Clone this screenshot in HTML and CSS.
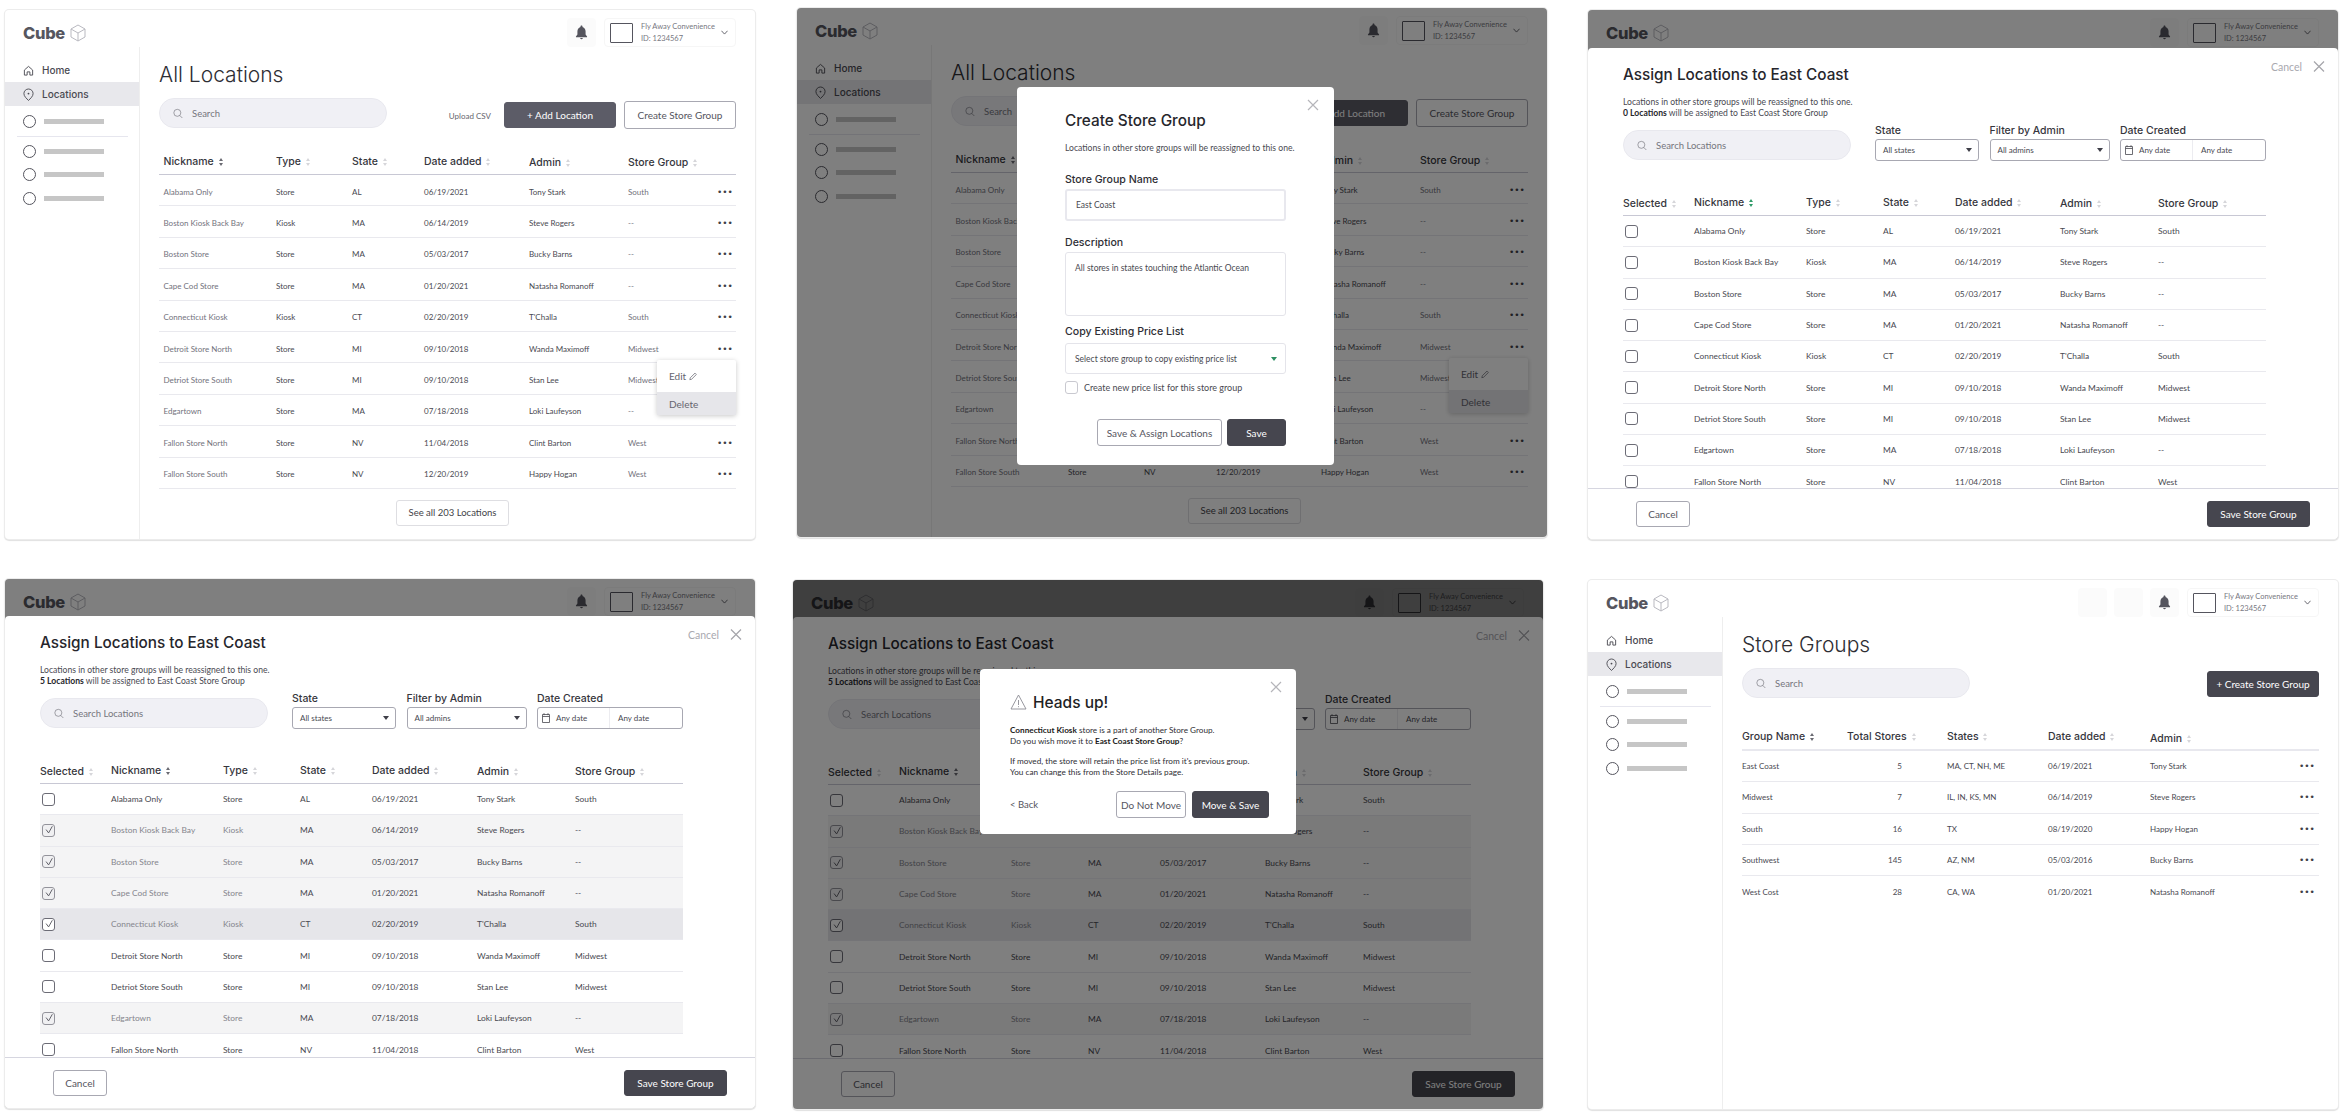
FILE: index.html
```html
<!DOCTYPE html>
<html>
<head>
  <meta charset="utf-8">
  <title>Cube store groups flow</title>
  <link rel="stylesheet" href="styles.css">
</head>
<body>
  <svg class="icon-defs" aria-hidden="true">
    <symbol id="i-cube" viewBox="0 0 16 18"><path d="M8 1l7 4v8l-7 4-7-4V5zM1 5l7 4 7-4M8 9v8" fill="none" stroke="currentColor"/></symbol>
    <symbol id="i-bell" viewBox="0 0 14 16"><path d="M7 .5c-.7 0-1.1.5-1.1 1.1v.5C3.7 2.7 2.6 4.6 2.6 7v3.2L1 12.2v.8h12v-.8l-1.6-2V7c0-2.4-1.1-4.3-3.3-4.9v-.5C8.100 1 7.700.5 7 .5zM5.600 13.800a1.400 1.400 0 0 0 2.800 0z" fill="currentColor"/></symbol>
    <symbol id="i-home" viewBox="0 0 12 12"><path d="M1.500 5.500L6 1.500l4.500 4V11H7.500V7.500h-3V11h-3z" fill="none" stroke="currentColor"/></symbol>
    <symbol id="i-pin" viewBox="0 0 12 14"><path d="M6 1a5 5 0 0 1 5 5c0 3-3 5.500-5 7.500C4 11.500 1 9 1 6a5 5 0 0 1 5-5z" fill="none" stroke="currentColor"/><circle cx="6" cy="6" r="1" fill="currentColor"/></symbol>
    <symbol id="i-search" viewBox="0 0 12 12"><circle cx="5.200" cy="5.200" r="4.200" fill="none" stroke="currentColor" stroke-width=".8"/><path d="M8.200 8.400l3 3" stroke="currentColor" stroke-width=".8"/></symbol>
    <symbol id="i-chev" viewBox="0 0 8 5"><path d="M.5.500L4 4.300 7.500.5" fill="none" stroke="currentColor"/></symbol>
    <symbol id="i-x" viewBox="0 0 12 12"><path d="M1 1l10 10M11 1L1 11" fill="none" stroke="currentColor" stroke-width="1.200"/></symbol>
    <symbol id="i-pencil" viewBox="0 0 10 10"><path d="M1 9l.6-2.400L7.500.8l1.700 1.700-5.900 5.900z" fill="none" stroke="currentColor" stroke-width=".9"/></symbol>
    <symbol id="i-cal" viewBox="0 0 8 10"><path d="M.5 1.500h7v8h-7zM.5 3.500h7M2 .2v2M6 .2v2" fill="none" stroke="currentColor" stroke-width=".8"/></symbol>
    <symbol id="i-check" viewBox="0 0 12 12"><path d="M2.500 5.500L5.500 9.500 10 1.500" fill="none" stroke="currentColor" stroke-width="1.100"/></symbol>
    <symbol id="i-warn" viewBox="0 0 17 16"><path d="M8.500 1L16 15H1zM8.500 6v5M8.500 12.200v1" fill="none" stroke="currentColor" stroke-width=".9"/></symbol>
  </svg>

  <div class="board">

    <!-- 1: all locations -->
    <section class="panel p1">
      <header class="topbar">
        <div class="logo">Cube<svg class="logo-cube"><use href="#i-cube"/></svg></div>
        <div class="tool-box"><svg class="bell"><use href="#i-bell"/></svg></div>
        <div class="account">
          <span class="account-img"></span>
          <span class="account-text"><b>Fly Away Convenience</b><b>ID: 1234567</b></span>
          <svg class="chev"><use href="#i-chev"/></svg>
        </div>
      </header>
      <div class="shell">
        <nav class="sidebar">
          <a class="nav-item"><svg class="nav-icon"><use href="#i-home"/></svg>Home</a>
          <a class="nav-item active"><svg class="nav-icon"><use href="#i-pin"/></svg>Locations</a>
          <div class="ph first"><i></i><u></u></div>
          <hr class="nav-line">
          <div class="ph"><i></i><u></u></div>
          <div class="ph"><i></i><u></u></div>
          <div class="ph"><i></i><u></u></div>
        </nav>
        <main class="main">
          <h1 class="page-title">All Locations</h1>
          <div class="actions">
            <div class="search"><svg><use href="#i-search"/></svg>Search</div>
            <a class="upload">Upload CSV</a>
            <button class="btn dark soft add">+ Add Location</button>
            <button class="btn line create">Create Store Group</button>
          </div>
          <div class="table locs">
            <div class="row head"><span>Nickname <i class="sort on"></i></span><span>Type <i class="sort"></i></span><span>State <i class="sort"></i></span><span>Date added <i class="sort"></i></span><span class="low">Admin <i class="sort"></i></span><span class="low">Store Group <i class="sort"></i></span></div>
            <div class="row"><span>Alabama Only</span><span>Store</span><span>AL</span><span>06/19/2021</span><span>Tony Stark</span><span>South</span><b class="dots">•••</b></div>
            <div class="row"><span>Boston Kiosk Back Bay</span><span>Kiosk</span><span>MA</span><span>06/14/2019</span><span>Steve Rogers</span><span>--</span><b class="dots">•••</b></div>
            <div class="row"><span>Boston Store</span><span>Store</span><span>MA</span><span>05/03/2017</span><span>Bucky Barns</span><span>--</span><b class="dots">•••</b></div>
            <div class="row"><span>Cape Cod Store</span><span>Store</span><span>MA</span><span>01/20/2021</span><span>Natasha Romanoff</span><span>--</span><b class="dots">•••</b></div>
            <div class="row"><span>Connecticut Kiosk</span><span>Kiosk</span><span>CT</span><span>02/20/2019</span><span>T'Challa</span><span>South</span><b class="dots">•••</b></div>
            <div class="row"><span>Detroit Store North</span><span>Store</span><span>MI</span><span>09/10/2018</span><span>Wanda Maximoff</span><span>Midwest</span><b class="dots">•••</b></div>
            <div class="row"><span>Detriot Store South</span><span>Store</span><span>MI</span><span>09/10/2018</span><span>Stan Lee</span><span>Midwest</span><b class="dots">•••</b></div>
            <div class="row"><span>Edgartown</span><span>Store</span><span>MA</span><span>07/18/2018</span><span>Loki Laufeyson</span><span>--</span><b class="dots">•••</b></div>
            <div class="row"><span>Fallon Store North</span><span>Store</span><span>NV</span><span>11/04/2018</span><span>Clint Barton</span><span>West</span><b class="dots">•••</b></div>
            <div class="row"><span>Fallon Store South</span><span>Store</span><span>NV</span><span>12/20/2019</span><span>Happy Hogan</span><span>West</span><b class="dots">•••</b></div>
          </div>
          <button class="btn line see-all">See all 203 Locations</button>
        </main>
      </div>
      <div class="row-menu">
        <div class="row-menu-item">Edit <svg><use href="#i-pencil"/></svg></div>
        <div class="row-menu-item del">Delete</div>
      </div>
    </section>

    <!-- 2: create store group modal -->
    <section class="panel p2">
      <header class="topbar">
        <div class="logo">Cube<svg class="logo-cube"><use href="#i-cube"/></svg></div>
        <div class="tool-box"><svg class="bell"><use href="#i-bell"/></svg></div>
        <div class="account">
          <span class="account-img"></span>
          <span class="account-text"><b>Fly Away Convenience</b><b>ID: 1234567</b></span>
          <svg class="chev"><use href="#i-chev"/></svg>
        </div>
      </header>
      <div class="shell">
        <nav class="sidebar">
          <a class="nav-item"><svg class="nav-icon"><use href="#i-home"/></svg>Home</a>
          <a class="nav-item active"><svg class="nav-icon"><use href="#i-pin"/></svg>Locations</a>
          <div class="ph first"><i></i><u></u></div>
          <hr class="nav-line">
          <div class="ph"><i></i><u></u></div>
          <div class="ph"><i></i><u></u></div>
          <div class="ph"><i></i><u></u></div>
        </nav>
        <main class="main">
          <h1 class="page-title">All Locations</h1>
          <div class="actions">
            <div class="search"><svg><use href="#i-search"/></svg>Search</div>
            <a class="upload">Upload CSV</a>
            <button class="btn dark soft add">+ Add Location</button>
            <button class="btn line create">Create Store Group</button>
          </div>
          <div class="table locs">
            <div class="row head"><span>Nickname <i class="sort on"></i></span><span>Type <i class="sort"></i></span><span>State <i class="sort"></i></span><span>Date added <i class="sort"></i></span><span class="low">Admin <i class="sort"></i></span><span class="low">Store Group <i class="sort"></i></span></div>
            <div class="row"><span>Alabama Only</span><span>Store</span><span>AL</span><span>06/19/2021</span><span>Tony Stark</span><span>South</span><b class="dots">•••</b></div>
            <div class="row"><span>Boston Kiosk Back Bay</span><span>Kiosk</span><span>MA</span><span>06/14/2019</span><span>Steve Rogers</span><span>--</span><b class="dots">•••</b></div>
            <div class="row"><span>Boston Store</span><span>Store</span><span>MA</span><span>05/03/2017</span><span>Bucky Barns</span><span>--</span><b class="dots">•••</b></div>
            <div class="row"><span>Cape Cod Store</span><span>Store</span><span>MA</span><span>01/20/2021</span><span>Natasha Romanoff</span><span>--</span><b class="dots">•••</b></div>
            <div class="row"><span>Connecticut Kiosk</span><span>Kiosk</span><span>CT</span><span>02/20/2019</span><span>T'Challa</span><span>South</span><b class="dots">•••</b></div>
            <div class="row"><span>Detroit Store North</span><span>Store</span><span>MI</span><span>09/10/2018</span><span>Wanda Maximoff</span><span>Midwest</span><b class="dots">•••</b></div>
            <div class="row"><span>Detriot Store South</span><span>Store</span><span>MI</span><span>09/10/2018</span><span>Stan Lee</span><span>Midwest</span><b class="dots">•••</b></div>
            <div class="row"><span>Edgartown</span><span>Store</span><span>MA</span><span>07/18/2018</span><span>Loki Laufeyson</span><span>--</span><b class="dots">•••</b></div>
            <div class="row"><span>Fallon Store North</span><span>Store</span><span>NV</span><span>11/04/2018</span><span>Clint Barton</span><span>West</span><b class="dots">•••</b></div>
            <div class="row"><span>Fallon Store South</span><span>Store</span><span>NV</span><span>12/20/2019</span><span>Happy Hogan</span><span>West</span><b class="dots">•••</b></div>
          </div>
          <button class="btn line see-all">See all 203 Locations</button>
        </main>
      </div>
      <div class="row-menu">
        <div class="row-menu-item">Edit <svg><use href="#i-pencil"/></svg></div>
        <div class="row-menu-item del">Delete</div>
      </div>
      <div class="scrim"></div>
      <div class="modal create-modal">
        <svg class="modal-close"><use href="#i-x"/></svg>
        <h2 class="modal-title">Create Store Group</h2>
        <p class="modal-sub">Locations in other store groups will be reassigned to this one.</p>
        <label class="field-label first">Store Group Name</label>
        <div class="input focus">East Coast</div>
        <label class="field-label">Description</label>
        <div class="input area">All stores in states touching the Atlantic Ocean</div>
        <label class="field-label tight">Copy Existing Price List</label>
        <div class="input pick">Select store group to copy existing price list<i class="caret green"></i></div>
        <div class="check-line"><i class="cb"></i>Create new price list for this store group</div>
        <div class="modal-btns">
          <button class="btn line assign">Save &amp; Assign Locations</button>
          <button class="btn dark save">Save</button>
        </div>
      </div>
    </section>

    <!-- 3: assign locations, nothing picked -->
    <section class="panel p3">
      <header class="topbar">
        <div class="logo">Cube<svg class="logo-cube"><use href="#i-cube"/></svg></div>
        <div class="tool-box"><svg class="bell"><use href="#i-bell"/></svg></div>
        <div class="account">
          <span class="account-img"></span>
          <span class="account-text"><b>Fly Away Convenience</b><b>ID: 1234567</b></span>
          <svg class="chev"><use href="#i-chev"/></svg>
        </div>
      </header>
      <div class="scrim"></div>
      <div class="sheet">
        <div class="sheet-close">Cancel<svg><use href="#i-x"/></svg></div>
        <h2 class="sheet-title">Assign Locations to East Coast</h2>
        <p class="sheet-sub">Locations in other store groups will be reassigned to this one.<br><b>0 Locations</b> will be assigned to East Coast Store Group</p>
        <div class="filters">
          <div class="search"><svg><use href="#i-search"/></svg>Search Locations</div>
          <div class="filter state"><label>State</label><div class="pick-sm">All states<i class="caret"></i></div></div>
          <div class="filter admin"><label>Filter by Admin</label><div class="pick-sm">All admins<i class="caret"></i></div></div>
          <div class="filter date"><label>Date Created</label><div class="pick-sm dates"><span><svg><use href="#i-cal"/></svg>Any date</span><span>Any date</span></div></div>
        </div>
        <div class="table assign-list">
          <div class="row head"><span class="low">Selected <i class="sort"></i></span><span>Nickname <i class="sort green"></i></span><span>Type <i class="sort"></i></span><span>State <i class="sort"></i></span><span>Date added <i class="sort"></i></span><span class="low">Admin <i class="sort"></i></span><span class="low">Store Group <i class="sort"></i></span></div>
          <div class="rows-clip">
            <div class="row"><span><i class="cb"></i></span><span>Alabama Only</span><span>Store</span><span>AL</span><span>06/19/2021</span><span>Tony Stark</span><span>South</span></div>
            <div class="row"><span><i class="cb"></i></span><span>Boston Kiosk Back Bay</span><span>Kiosk</span><span>MA</span><span>06/14/2019</span><span>Steve Rogers</span><span>--</span></div>
            <div class="row"><span><i class="cb"></i></span><span>Boston Store</span><span>Store</span><span>MA</span><span>05/03/2017</span><span>Bucky Barns</span><span>--</span></div>
            <div class="row"><span><i class="cb"></i></span><span>Cape Cod Store</span><span>Store</span><span>MA</span><span>01/20/2021</span><span>Natasha Romanoff</span><span>--</span></div>
            <div class="row"><span><i class="cb"></i></span><span>Connecticut Kiosk</span><span>Kiosk</span><span>CT</span><span>02/20/2019</span><span>T'Challa</span><span>South</span></div>
            <div class="row"><span><i class="cb"></i></span><span>Detroit Store North</span><span>Store</span><span>MI</span><span>09/10/2018</span><span>Wanda Maximoff</span><span>Midwest</span></div>
            <div class="row"><span><i class="cb"></i></span><span>Detriot Store South</span><span>Store</span><span>MI</span><span>09/10/2018</span><span>Stan Lee</span><span>Midwest</span></div>
            <div class="row"><span><i class="cb"></i></span><span>Edgartown</span><span>Store</span><span>MA</span><span>07/18/2018</span><span>Loki Laufeyson</span><span>--</span></div>
            <div class="row"><span><i class="cb"></i></span><span>Fallon Store North</span><span>Store</span><span>NV</span><span>11/04/2018</span><span>Clint Barton</span><span>West</span></div>
          </div>
        </div>
        <footer class="sheet-foot">
          <button class="btn line cancel">Cancel</button>
          <button class="btn dark save-group">Save Store Group</button>
        </footer>
      </div>
    </section>

    <!-- 4: assign locations, five picked -->
    <section class="panel p4">
      <header class="topbar">
        <div class="logo">Cube<svg class="logo-cube"><use href="#i-cube"/></svg></div>
        <div class="tool-box"><svg class="bell"><use href="#i-bell"/></svg></div>
        <div class="account">
          <span class="account-img"></span>
          <span class="account-text"><b>Fly Away Convenience</b><b>ID: 1234567</b></span>
          <svg class="chev"><use href="#i-chev"/></svg>
        </div>
      </header>
      <div class="scrim"></div>
      <div class="sheet">
        <div class="sheet-close">Cancel<svg><use href="#i-x"/></svg></div>
        <h2 class="sheet-title">Assign Locations to East Coast</h2>
        <p class="sheet-sub">Locations in other store groups will be reassigned to this one.<br><b>5 Locations</b> will be assigned to East Coast Store Group</p>
        <div class="filters">
          <div class="search"><svg><use href="#i-search"/></svg>Search Locations</div>
          <div class="filter state"><label>State</label><div class="pick-sm">All states<i class="caret"></i></div></div>
          <div class="filter admin"><label>Filter by Admin</label><div class="pick-sm">All admins<i class="caret"></i></div></div>
          <div class="filter date"><label>Date Created</label><div class="pick-sm dates"><span><svg><use href="#i-cal"/></svg>Any date</span><span>Any date</span></div></div>
        </div>
        <div class="table assign-list">
          <div class="row head"><span class="low">Selected <i class="sort"></i></span><span>Nickname <i class="sort on"></i></span><span>Type <i class="sort"></i></span><span>State <i class="sort"></i></span><span>Date added <i class="sort"></i></span><span class="low">Admin <i class="sort"></i></span><span class="low">Store Group <i class="sort"></i></span></div>
          <div class="rows-clip">
            <div class="row"><span><i class="cb"></i></span><span>Alabama Only</span><span>Store</span><span>AL</span><span>06/19/2021</span><span>Tony Stark</span><span>South</span></div>
            <div class="row sel"><span><i class="cb"><svg><use href="#i-check"/></svg></i></span><span>Boston Kiosk Back Bay</span><span>Kiosk</span><span>MA</span><span>06/14/2019</span><span>Steve Rogers</span><span>--</span></div>
            <div class="row sel"><span><i class="cb"><svg><use href="#i-check"/></svg></i></span><span>Boston Store</span><span>Store</span><span>MA</span><span>05/03/2017</span><span>Bucky Barns</span><span>--</span></div>
            <div class="row sel"><span><i class="cb"><svg><use href="#i-check"/></svg></i></span><span>Cape Cod Store</span><span>Store</span><span>MA</span><span>01/20/2021</span><span>Natasha Romanoff</span><span>--</span></div>
            <div class="row cur"><span><i class="cb"><svg><use href="#i-check"/></svg></i></span><span>Connecticut Kiosk</span><span>Kiosk</span><span>CT</span><span>02/20/2019</span><span>T'Challa</span><span>South</span></div>
            <div class="row"><span><i class="cb"></i></span><span>Detroit Store North</span><span>Store</span><span>MI</span><span>09/10/2018</span><span>Wanda Maximoff</span><span>Midwest</span></div>
            <div class="row"><span><i class="cb"></i></span><span>Detriot Store South</span><span>Store</span><span>MI</span><span>09/10/2018</span><span>Stan Lee</span><span>Midwest</span></div>
            <div class="row sel"><span><i class="cb"><svg><use href="#i-check"/></svg></i></span><span>Edgartown</span><span>Store</span><span>MA</span><span>07/18/2018</span><span>Loki Laufeyson</span><span>--</span></div>
            <div class="row"><span><i class="cb"></i></span><span>Fallon Store North</span><span>Store</span><span>NV</span><span>11/04/2018</span><span>Clint Barton</span><span>West</span></div>
          </div>
        </div>
        <footer class="sheet-foot">
          <button class="btn line cancel">Cancel</button>
          <button class="btn dark save-group">Save Store Group</button>
        </footer>
      </div>
    </section>

    <!-- 5: heads up dialog over the picked list -->
    <section class="panel p5">
      <header class="topbar">
        <div class="logo">Cube<svg class="logo-cube"><use href="#i-cube"/></svg></div>
        <div class="tool-box"><svg class="bell"><use href="#i-bell"/></svg></div>
        <div class="account">
          <span class="account-img"></span>
          <span class="account-text"><b>Fly Away Convenience</b><b>ID: 1234567</b></span>
          <svg class="chev"><use href="#i-chev"/></svg>
        </div>
      </header>
      <div class="scrim"></div>
      <div class="sheet">
        <div class="sheet-close">Cancel<svg><use href="#i-x"/></svg></div>
        <h2 class="sheet-title">Assign Locations to East Coast</h2>
        <p class="sheet-sub">Locations in other store groups will be reassigned to this one.<br><b>5 Locations</b> will be assigned to East Coast Store Group</p>
        <div class="filters">
          <div class="search"><svg><use href="#i-search"/></svg>Search Locations</div>
          <div class="filter state"><label>State</label><div class="pick-sm">All states<i class="caret"></i></div></div>
          <div class="filter admin"><label>Filter by Admin</label><div class="pick-sm">All admins<i class="caret"></i></div></div>
          <div class="filter date"><label>Date Created</label><div class="pick-sm dates"><span><svg><use href="#i-cal"/></svg>Any date</span><span>Any date</span></div></div>
        </div>
        <div class="table assign-list">
          <div class="row head"><span class="low">Selected <i class="sort"></i></span><span>Nickname <i class="sort on"></i></span><span>Type <i class="sort"></i></span><span>State <i class="sort"></i></span><span>Date added <i class="sort"></i></span><span class="low">Admin <i class="sort"></i></span><span class="low">Store Group <i class="sort"></i></span></div>
          <div class="rows-clip">
            <div class="row"><span><i class="cb"></i></span><span>Alabama Only</span><span>Store</span><span>AL</span><span>06/19/2021</span><span>Tony Stark</span><span>South</span></div>
            <div class="row sel"><span><i class="cb"><svg><use href="#i-check"/></svg></i></span><span>Boston Kiosk Back Bay</span><span>Kiosk</span><span>MA</span><span>06/14/2019</span><span>Steve Rogers</span><span>--</span></div>
            <div class="row sel"><span><i class="cb"><svg><use href="#i-check"/></svg></i></span><span>Boston Store</span><span>Store</span><span>MA</span><span>05/03/2017</span><span>Bucky Barns</span><span>--</span></div>
            <div class="row sel"><span><i class="cb"><svg><use href="#i-check"/></svg></i></span><span>Cape Cod Store</span><span>Store</span><span>MA</span><span>01/20/2021</span><span>Natasha Romanoff</span><span>--</span></div>
            <div class="row cur"><span><i class="cb"><svg><use href="#i-check"/></svg></i></span><span>Connecticut Kiosk</span><span>Kiosk</span><span>CT</span><span>02/20/2019</span><span>T'Challa</span><span>South</span></div>
            <div class="row"><span><i class="cb"></i></span><span>Detroit Store North</span><span>Store</span><span>MI</span><span>09/10/2018</span><span>Wanda Maximoff</span><span>Midwest</span></div>
            <div class="row"><span><i class="cb"></i></span><span>Detriot Store South</span><span>Store</span><span>MI</span><span>09/10/2018</span><span>Stan Lee</span><span>Midwest</span></div>
            <div class="row sel"><span><i class="cb"><svg><use href="#i-check"/></svg></i></span><span>Edgartown</span><span>Store</span><span>MA</span><span>07/18/2018</span><span>Loki Laufeyson</span><span>--</span></div>
            <div class="row"><span><i class="cb"></i></span><span>Fallon Store North</span><span>Store</span><span>NV</span><span>11/04/2018</span><span>Clint Barton</span><span>West</span></div>
          </div>
        </div>
        <footer class="sheet-foot">
          <button class="btn line cancel">Cancel</button>
          <button class="btn dark save-group">Save Store Group</button>
        </footer>
      </div>
      <div class="scrim"></div>
      <div class="modal heads-up">
        <svg class="modal-close"><use href="#i-x"/></svg>
        <h2 class="heads-title"><svg><use href="#i-warn"/></svg>Heads up!</h2>
        <p class="heads-text"><b>Connecticut Kiosk</b> store is a part of another Store Group.<br>Do you wish move it to <b>East Coast Store Group</b>?</p>
        <p class="heads-text">If moved, the store will retain the price list from it's previous group.<br>You can change this from the Store Details page.</p>
        <div class="heads-btns">
          <a class="back">&lt; Back</a>
          <button class="btn line no-move">Do Not Move</button>
          <button class="btn dark move">Move &amp; Save</button>
        </div>
      </div>
    </section>

    <!-- 6: store groups -->
    <section class="panel p6">
      <header class="topbar">
        <div class="logo">Cube<svg class="logo-cube"><use href="#i-cube"/></svg></div>
        <div class="tool-box spare"></div>
        <div class="tool-box spare"></div>
        <div class="tool-box"><svg class="bell"><use href="#i-bell"/></svg></div>
        <div class="account">
          <span class="account-img"></span>
          <span class="account-text"><b>Fly Away Convenience</b><b>ID: 1234567</b></span>
          <svg class="chev"><use href="#i-chev"/></svg>
        </div>
      </header>
      <div class="shell">
        <nav class="sidebar">
          <a class="nav-item"><svg class="nav-icon"><use href="#i-home"/></svg>Home</a>
          <a class="nav-item active"><svg class="nav-icon"><use href="#i-pin"/></svg>Locations</a>
          <div class="ph first"><i></i><u></u></div>
          <hr class="nav-line">
          <div class="ph"><i></i><u></u></div>
          <div class="ph"><i></i><u></u></div>
          <div class="ph"><i></i><u></u></div>
        </nav>
        <main class="main">
          <h1 class="page-title">Store Groups</h1>
          <div class="actions">
            <div class="search"><svg><use href="#i-search"/></svg>Search</div>
            <button class="btn dark new-group">+ Create Store Group</button>
          </div>
          <div class="table groups">
            <div class="row head"><span>Group Name <i class="sort on"></i></span><span>Total Stores <i class="sort"></i></span><span>States <i class="sort"></i></span><span>Date added <i class="sort"></i></span><span class="low">Admin <i class="sort"></i></span></div>
            <div class="row"><span>East Coast</span><span class="num">5</span><span>MA, CT, NH, ME</span><span>06/19/2021</span><span>Tony Stark</span><b class="dots">•••</b></div>
            <div class="row"><span>Midwest</span><span class="num">7</span><span>IL, IN, KS, MN</span><span>06/14/2019</span><span>Steve Rogers</span><b class="dots">•••</b></div>
            <div class="row"><span>South</span><span class="num">16</span><span>TX</span><span>08/19/2020</span><span>Happy Hogan</span><b class="dots">•••</b></div>
            <div class="row"><span>Southwest</span><span class="num">145</span><span>AZ, NM</span><span>05/03/2016</span><span>Bucky Barns</span><b class="dots">•••</b></div>
            <div class="row"><span>West Cost</span><span class="num">28</span><span>CA, WA</span><span>01/20/2021</span><span>Natasha Romanoff</span><b class="dots">•••</b></div>
          </div>
        </main>
      </div>
    </section>

  </div>
</body>
</html>
```

FILE: styles.css
```css
* {
  box-sizing: border-box;
}
body {
  margin: 0;
  background: #fff;
  font-family: "Lato", sans-serif;
  color: #3f3f48;
}
.icon-defs {
  display: none;
}
button {
  font: inherit;
  padding: 0;
  cursor: pointer;
}
h1, h2, p {
  margin: 0;
  font-weight: normal;
}

/* the six screens sit on a free board */
.board {
  position: relative;
  width: 2350px;
  height: 1120px;
  overflow: hidden;
}
.panel {
  position: absolute;
  width: 750px;
  height: 529px;
  background: #fff;
  border-radius: 4px;
  overflow: hidden;
  box-shadow: 0 0 0 1px #ececec, 0 1px 1px 1px #e0e0e0;
}
.p1 { left: 5px; top: 10px; }
.p2 { left: 797px; top: 8px; }
.p3 { left: 1588px; top: 10px; }
.p4 { left: 5px; top: 579px; }
.p5 { left: 793px; top: 580px; }
.p6 { left: 1588px; top: 580px; }

/* top bar */
.topbar {
  display: flex;
  height: 37px;
  padding: 8px 19px 0 18px;
  gap: 8px;
}
.logo {
  display: flex;
  align-items: center;
  margin-right: auto;
  font-family: "Inter", sans-serif;
  font-weight: 800;
  font-size: 16.500px;
  letter-spacing: -.3px;
  color: #56565f;
}
.logo-cube {
  width: 16px;
  height: 18px;
  margin-left: 5px;
  color: #b9b9c0;
}
.tool-box {
  display: flex;
  align-items: center;
  justify-content: center;
  width: 29px;
  background: #fbfbfb;
  border-radius: 4px;
}
.tool-box.spare {
  margin-right: -1px;
}
.bell {
  width: 13px;
  height: 15px;
  color: #55555e;
}
.account {
  display: flex;
  align-items: center;
  width: 132px;
  padding: 0 5px;
  border: 1px solid #f6f6f6;
  border-radius: 4px;
}
.account-img {
  width: 23px;
  height: 20px;
  border: 1px solid #55555e;
  border-radius: 1px;
}
.account-text {
  display: flex;
  flex-direction: column;
  gap: 4px;
  margin-left: 8px;
  font-size: 7.500px;
  line-height: 8px;
  color: #77777f;
}
.account-text b {
  font-weight: normal;
}
.chev {
  width: 7px;
  height: 5px;
  margin-left: auto;
  margin-right: 2px;
  color: #55555e;
}

/* sidebar */
.shell {
  display: flex;
  height: 492px;
}
.sidebar {
  flex: none;
  width: 135px;
  padding-top: 11px;
  border-right: 1px solid #eeeeee;
}
.nav-item {
  display: flex;
  align-items: center;
  height: 24px;
  padding-left: 18px;
  font-family: "Inter", sans-serif;
  font-size: 10px;
  font-weight: 500;
  color: #4a4a52;
}
.nav-item.active {
  background: #e8e8ec;
}
.nav-icon {
  width: 11px;
  height: 13px;
  margin-right: 8px;
  margin-left: 0;
}
.ph {
  display: flex;
  align-items: center;
  height: 23.500px;
  padding-left: 18px;
}
.ph.first {
  margin-top: 4px;
}
.ph i {
  width: 13px;
  height: 13px;
  border: 1px solid #55555e;
  border-radius: 50%;
}
.ph u {
  width: 60px;
  height: 5px;
  margin-left: 8px;
  background: #c6c6c6;
}
.nav-line {
  width: 111px;
  height: 1px;
  margin: 2px 0 3px 12px;
  border: 0;
  background: #e6e6ee;
}

/* main column */
.main {
  flex: 1;
  min-width: 0;
  padding: 13px 19px 0;
}
.page-title {
  height: 30px;
  font-family: "Inter", sans-serif;
  font-size: 21px;
  font-weight: 300;
  line-height: 30px;
  color: #2e2e34;
}
.actions {
  display: flex;
  align-items: flex-end;
  height: 30px;
  margin-top: 8px;
}
.search {
  display: flex;
  align-items: center;
  flex: none;
  align-self: flex-start;
  width: 228px;
  height: 30px;
  padding-left: 13px;
  background: #f0f0f5;
  border: 1px solid #e8e8ee;
  border-radius: 15px;
  font-size: 9.500px;
  color: #75757d;
}
.search svg {
  width: 10px;
  height: 11px;
  margin-right: 9px;
  color: #75757d;
}
.upload {
  margin-left: auto;
  margin-right: 13px;
  margin-bottom: 7px;
  font-size: 8px;
  color: #66666e;
}
.btn {
  display: inline-flex;
  align-items: center;
  justify-content: center;
  height: 27px;
  border-radius: 3px;
  font-size: 10px;
  white-space: nowrap;
}
.btn.dark {
  color: #fff;
  background: #46464f;
  border: 1px solid #46464f;
}
.btn.dark.soft {
  background: #5c5c67;
  border-color: #5c5c67;
}
.btn.line {
  color: #55555e;
  background: #fff;
  border: 1px solid #a8a8b2;
}
.add {
  width: 112px;
  height: 26px;
  margin-right: 8px;
}
.create {
  width: 112px;
  height: 28px;
  margin-bottom: -1px;
}
.btn.see-all {
  display: flex;
  width: 113px;
  height: 26px;
  margin: 11px 0 0 237px;
  border-color: #dedee2;
  color: #3f3f48;
  font-size: 9.500px;
}
.new-group {
  width: 112px;
  height: 26px;
  margin-left: auto;
  margin-bottom: 1px;
}

/* tables */
.table {
  margin-top: 20px;
}
.row {
  display: grid;
  align-items: center;
  height: 31.400px;
  border-bottom: 1px solid #e9e9ee;
  font-size: 8px;
  color: #494951;
  white-space: nowrap;
}
.row.head {
  height: 27px;
  border-bottom-color: #c8c8d4;
  font-family: "Inter", sans-serif;
  font-size: 10.500px;
  font-weight: 500;
  color: #36363d;
}
.row .low {
  padding-top: 3px;
}
.locs .row {
  grid-template-columns: 112.500px 76px 72px 105px 99px 89px 18px;
  padding-left: 4.500px;
}
.locs .row:not(.head) {
  padding-top: 3px;
}
.locs .row:not(.head) span:nth-child(1),
.locs .row:not(.head) span:nth-child(6) {
  color: #72727c;
}
.assign-list {
  margin-top: 28px;
}
.assign-list .row {
  grid-template-columns: 71px 112px 77px 72px 105px 98px 108px;
  height: 31.300px;
  font-size: 8.400px;
}
.assign-list .row.head {
  height: 27px;
  font-size: 10.500px;
}
.rows-clip {
  height: 272px;
  overflow: hidden;
}
.groups {
  margin-top: 26px;
}
.groups .row {
  grid-template-columns: 105px 100px 101px 102px 149px 20px;
  height: 31.300px;
}
.groups .row.head {
  height: 27px;
  border-bottom: 2px solid #e8e8ee;
}
.groups .row:last-child {
  border-bottom: 0;
}
.groups .num {
  width: 55px;
  text-align: right;
}
.dots {
  font-family: "DejaVu Sans", sans-serif;
  font-size: 9px;
  font-weight: normal;
  color: #3f3f48;
}
.row-menu {
  position: absolute;
  left: 652px;
  top: 350px;
  width: 79px;
  height: 55px;
  background: #fff;
  border-radius: 2px;
  box-shadow: 0 1px 5px rgba(0, 0, 0, .22);
  font-size: 10px;
  color: #65656e;
}
.row-menu-item {
  display: flex;
  align-items: center;
  height: 32px;
  padding-left: 12px;
}
.row-menu-item svg {
  width: 8px;
  height: 9px;
  margin-left: 3px;
}
.row-menu-item.del {
  height: 23px;
  background: #e6e6ea;
}
.sort {
  position: relative;
  display: inline-block;
  width: 5px;
  height: 8px;
  margin-left: 2px;
  vertical-align: -1px;
  color: #d6d6da;
}
.sort.on {
  color: #6a6a72;
}
.sort.green {
  color: #2e9a68;
}
.sort::before,
.sort::after {
  content: "";
  position: absolute;
  left: 0;
  border-left: 2.500px solid transparent;
  border-right: 2.500px solid transparent;
}
.sort::before {
  top: 0;
  border-bottom: 3.500px solid currentColor;
}
.sort::after {
  bottom: 0;
  border-top: 3.500px solid currentColor;
}

/* overlays */
.scrim {
  position: absolute;
  inset: 0;
  background: rgba(0, 0, 0, .5);
}
.modal {
  position: absolute;
  background: #fff;
  border-radius: 4px;
}
.modal-close {
  position: absolute;
  width: 12px;
  height: 12px;
  top: 12px;
  right: 15px;
  color: #b5b5ba;
}
.create-modal {
  left: 220px;
  top: 79px;
  width: 317px;
  height: 378px;
  padding: 25px 48px 0;
}
.modal-title {
  font-family: "Inter", sans-serif;
  font-size: 15.300px;
  font-weight: 500;
  line-height: 18px;
  color: #26262c;
}
.modal-sub {
  margin-top: 12px;
  font-size: 8.600px;
  line-height: 12px;
  white-space: nowrap;
  color: #494951;
}
.field-label {
  display: block;
  margin-top: 16px;
  font-family: "Inter", sans-serif;
  font-size: 10.600px;
  font-weight: 500;
  line-height: 12px;
  color: #2e2e34;
}
.field-label.first {
  margin-top: 20px;
}
.field-label.tight {
  margin-top: 10px;
}
.input {
  position: relative;
  display: flex;
  align-items: center;
  height: 32px;
  margin-top: 3px;
  padding-left: 9px;
  border: 1px solid #e4e4ea;
  border-radius: 3px;
  font-size: 8.500px;
  color: #494951;
}
.input.focus {
  border: 2px solid #e8e8ee;
}
.input.area {
  align-items: flex-start;
  height: 64px;
  padding-top: 10px;
}
.input.pick {
  height: 31px;
  margin-top: 5px;
}
.caret {
  position: absolute;
  right: 8px;
  top: 50%;
  margin-top: -2px;
  border-left: 3px solid transparent;
  border-right: 3px solid transparent;
  border-top: 4px solid #3f3f48;
}
.caret.green {
  border-top-color: #2e8f62;
}
.check-line {
  display: flex;
  align-items: center;
  height: 13px;
  margin-top: 7px;
  font-size: 9px;
  color: #494951;
}
.check-line .cb {
  margin-right: 6px;
  border-color: #c9c9d0;
}
.modal-btns {
  display: flex;
  justify-content: flex-end;
  gap: 5px;
  margin-top: 25px;
}
.assign {
  width: 125px;
}
.save {
  width: 59px;
}

/* assign sheet */
.sheet {
  position: absolute;
  left: 0;
  right: 0;
  top: 38px;
  bottom: 0;
  padding: 18px 72px 0 35px;
  background: #fff;
  border-radius: 4px 4px 0 0;
}
.p4 .sheet,
.p5 .sheet {
  top: 37px;
}
.sheet-close {
  position: absolute;
  top: 12px;
  right: 13px;
  display: flex;
  align-items: center;
  font-size: 10.500px;
  color: #a9a9af;
}
.sheet-close svg {
  width: 12px;
  height: 13px;
  margin-left: 11px;
  color: #a5a5aa;
}
.sheet-title {
  font-family: "Inter", sans-serif;
  font-size: 15.300px;
  font-weight: 500;
  line-height: 18px;
  color: #26262c;
}
.sheet-sub {
  margin-top: 12.500px;
  font-size: 8.600px;
  line-height: 11px;
  color: #494951;
}
.sheet-sub b {
  color: #26262c;
}
.filters {
  display: flex;
  height: 36px;
  margin-top: 6.500px;
}
.filters .search {
  margin-top: 5px;
}
.filter {
  margin-left: 10.500px;
}
.filter.state {
  margin-left: 24px;
  width: 104px;
}
.filter.admin {
  width: 120px;
}
.filter.date {
  width: 146px;
}
.filter label {
  display: block;
  font-family: "Inter", sans-serif;
  font-size: 10.500px;
  font-weight: 500;
  line-height: 12px;
  color: #36363d;
}
.pick-sm {
  position: relative;
  display: flex;
  align-items: center;
  height: 22px;
  margin-top: 2px;
  padding-left: 7px;
  background: #fff;
  border: 1px solid #a8a8b2;
  border-radius: 3px;
  font-size: 8px;
  color: #494951;
}
.pick-sm .caret {
  right: 6px;
}
.dates {
  padding-left: 0;
}
.dates span {
  display: flex;
  align-items: center;
  padding-left: 4px;
  width: 72px;
  height: 100%;
  border-right: 1px solid #ececf0;
}
.dates span:last-child {
  padding-left: 8px;
  border-right: 0;
}
.dates svg {
  width: 8px;
  height: 10px;
  margin-right: 6px;
}
.cb {
  display: flex;
  align-items: center;
  justify-content: center;
  width: 13px;
  height: 13px;
  margin-left: 2px;
  background: #fff;
  border: 1px solid #6c6c76;
  border-radius: 3px;
}
.check-line .cb {
  margin-left: 0;
}
.cb svg {
  width: 10px;
  height: 10px;
  color: #55555e;
}
.row.sel {
  background: #f4f4f5;
}
.row.cur {
  background: #e6e6ea;
}
.row.sel span:nth-child(2),
.row.sel span:nth-child(3),
.row.cur span:nth-child(2),
.row.cur span:nth-child(3) {
  color: #85858d;
}
.row.sel .cb {
  background: #f0f0f2;
  border-color: #93939b;
}
.sheet-foot {
  position: absolute;
  left: 0;
  right: 0;
  bottom: 0;
  display: flex;
  justify-content: space-between;
  align-items: flex-start;
  height: 51px;
  padding: 12px 28px 0 48px;
  background: #fff;
  border-top: 1px solid #d6d6e0;
}
.cancel {
  width: 54px;
  height: 26px;
}
.save-group {
  width: 103px;
  height: 26px;
}

/* heads up dialog */
.heads-up {
  left: 187px;
  top: 89px;
  width: 316px;
  height: 165px;
  padding: 22px 27px 0 30px;
}
.heads-up .modal-close {
  top: 12px;
  right: 14px;
}
.heads-title {
  display: flex;
  align-items: center;
  height: 22px;
  font-family: "Inter", sans-serif;
  font-size: 15.500px;
  font-weight: 500;
  color: #1f1f25;
}
.heads-title svg {
  width: 17px;
  height: 16px;
  margin-right: 6px;
  color: #8c8c94;
}
.heads-text {
  margin-top: 9px;
  font-size: 8.200px;
  line-height: 11px;
  color: #2e2e34;
}
.heads-title + .heads-text {
  margin-top: 11.500px;
}
.heads-text b {
  color: #1b1b20;
}
.heads-btns {
  display: flex;
  align-items: center;
  gap: 6px;
  margin-top: 13.500px;
}
.back {
  margin-right: auto;
  font-size: 9.500px;
  color: #55555e;
}
.no-move {
  width: 70px;
}
.move {
  width: 77px;
}
```
